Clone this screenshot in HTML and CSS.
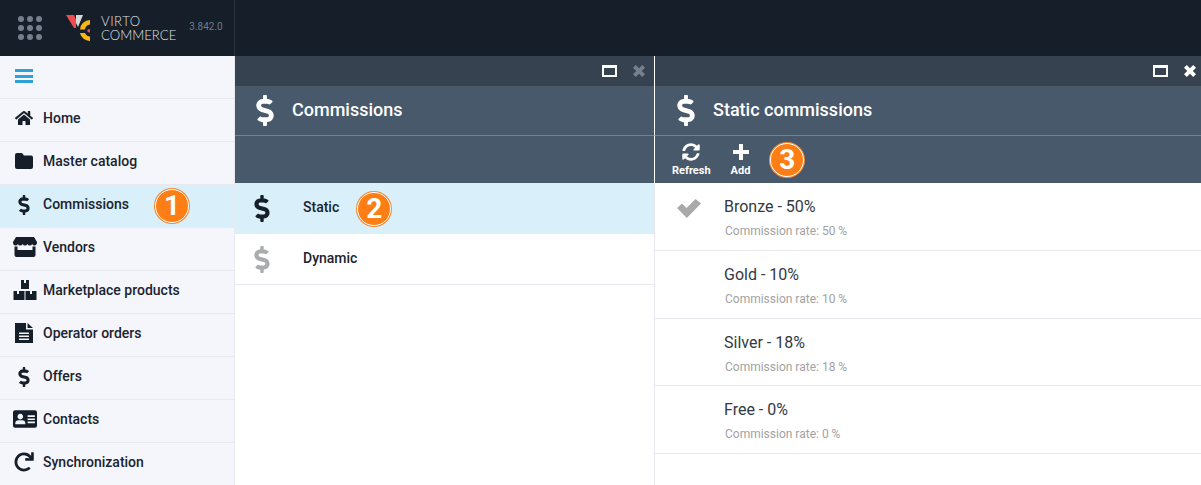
FILE: index.html
```html
<!DOCTYPE html>
<html lang="en">
<head>
    <meta charset="UTF-8">
    <title>Virto Commerce</title>
    <link rel="stylesheet" href="styles.css">
</head>
<body>
    <svg class="defs" width="0" height="0">
        <symbol id="i-dollar" viewBox="0 0 288 512"><path d="M209.2 233.4l-108-31.6C88.7 198.2 80 186.5 80 173.5c0-16.3 13.2-29.5 29.5-29.5h66.3c12.2 0 24.2 3.7 34.2 10.5 6.1 4.1 14.3 3.1 19.5-2l34.8-34c7.1-6.9 6.1-18.4-1.8-24.5C238 74.8 207.4 64.1 176 64V16c0-8.8-7.2-16-16-16h-32c-8.8 0-16 7.2-16 16v48h-2.5C45.8 64-5.4 118.7.5 183.6c4.2 46.1 39.4 83.6 83.8 96.6l102.5 30c12.5 3.7 21.2 15.3 21.2 28.3 0 16.3-13.2 29.5-29.5 29.5h-66.3C100 368 88 364.3 78 357.5c-6.1-4.1-14.3-3.1-19.5 2l-34.8 34c-7.1 6.9-6.1 18.4 1.8 24.5 24.5 19.2 55.1 29.9 86.5 30v48c0 8.8 7.2 16 16 16h32c8.8 0 16-7.2 16-16v-48.2c46.6-.9 90.3-28.6 105.7-72.7 21.5-61.6-14.6-124.8-73.5-141.7z"/></symbol>
        <symbol id="i-home" viewBox="-32 0 640 512"><path d="M280.37 148.26L96 300.11V464a16 16 0 0 0 16 16l112.06-.29a16 16 0 0 0 15.92-16V368a16 16 0 0 1 16-16h64a16 16 0 0 1 16 16v95.64a16 16 0 0 0 16 16.05L464 480a16 16 0 0 0 16-16V300L295.67 148.26a12.19 12.19 0 0 0-15.3 0zM571.6 251.47L488 182.56V44.05a12 12 0 0 0-12-12h-56a12 12 0 0 0-12 12v72.61L318.47 43a48 48 0 0 0-61 0L4.34 251.47a12 12 0 0 0-1.6 16.9l25.5 31A12 12 0 0 0 45.15 301l235.22-193.74a12.19 12.19 0 0 1 15.3 0L530.9 301a12 12 0 0 0 16.9-1.6l25.5-31a12 12 0 0 0-1.7-16.93z"/></symbol>
        <symbol id="i-folder" viewBox="-1 -2 20 20"><path d="M2 0 H7 L9 2.500 H16.500 A2 2 0 0 1 18 4.500 V14 A2 2 0 0 1 16 16 H2 A2 2 0 0 1 0 14 V2 A2 2 0 0 1 2 0 Z"/></symbol>
        <symbol id="i-store" viewBox="0 0 24 20"><path d="M3 0 H21 L24 5 V6 A2.500 2.500 0 0 1 19.200 7 A2.600 2.600 0 0 1 14.400 7 A2.600 2.600 0 0 1 9.600 7 A2.600 2.600 0 0 1 4.800 7 A2.500 2.500 0 0 1 0 6 V5 Z M1.500 9.500 H4.500 V13 H19.500 V9.500 H22.500 V18 A2 2 0 0 1 20.500 20 H3.500 A2 2 0 0 1 1.500 18 Z"/></symbol>
        <symbol id="i-cubes" viewBox="0 0 23 20"><path d="M7.500 0 H15.500 V9 H7.500 Z M10.500 0 V3 H12.500 V0 Z M0 11 H11 V20 H0 Z M3.500 11 V14 H5.500 V11 Z M12 11 H23 V20 H12 Z M16.500 11 V14 H18.500 V11 Z" fill-rule="evenodd"/></symbol>
        <symbol id="i-file" viewBox="0 0 18 20"><path d="M0 0 H11 V6.500 H18 V20 H0 Z M4 9.500 V11 H14 V9.500 Z M4 12.500 V14 H14 V12.500 Z M4 15.500 V17 H14 V15.500 Z M12.500 0 L18 5 H12.500 Z" fill-rule="evenodd"/></symbol>
        <symbol id="i-card" viewBox="0 0 23 17"><path d="M2 0 H21 A2 2 0 0 1 23 2 V15 A2 2 0 0 1 21 17 H2 A2 2 0 0 1 0 15 V2 A2 2 0 0 1 2 0 Z M7 3.500 A2.700 2.700 0 1 0 7.010 3.500 Z M2.200 13.500 H11.800 V12 A2.600 2.600 0 0 0 9.200 9.600 H4.800 A2.600 2.600 0 0 0 2.200 12 Z M14 5 V6.500 H21 V5 Z M14 8 V9.500 H21 V8 Z M14 11 V12.500 H21 V11 Z" fill-rule="evenodd"/></symbol>
        <symbol id="i-redo" viewBox="-6 -6 524 524"><path d="M500.33 0h-47.41a12 12 0 0 0-12 12.57l4 82.76A247.42 247.42 0 0 0 256 8C119.34 8 7.9 119.53 8 256.19 8.1 393.07 119.1 504 256 504a247.1 247.1 0 0 0 166.18-63.91 12 12 0 0 0 .48-17.43l-34-34a12 12 0 0 0-16.38-.55A176 176 0 1 1 402.1 157.8l-101.53-4.87a12 12 0 0 0-12.57 12v47.41a12 12 0 0 0 12 12h200.33a12 12 0 0 0 12-12V12a12 12 0 0 0-12-12z"/></symbol>
        <symbol id="i-refresh" viewBox="0 0 512 512"><path d="M370.72 133.28C339.458 104.008 298.888 87.962 255.848 88c-77.458.068-144.328 53.178-162.791 126.85-1.344 5.363-6.122 9.15-11.651 9.15H24.103c-7.498 0-13.194-6.807-11.807-14.176C33.933 94.924 134.813 8 256 8c66.448 0 126.791 26.136 171.315 68.685L463.03 40.97C478.149 25.851 504 36.559 504 57.941V192c0 13.255-10.745 24-24 24H345.941c-21.382 0-32.09-25.851-16.971-40.971l41.75-41.749zM32 296h134.059c21.382 0 32.09 25.851 16.971 40.971l-41.75 41.75c31.262 29.273 71.835 45.319 114.876 45.28 77.418-.07 144.315-53.144 162.787-126.849 1.344-5.363 6.122-9.15 11.651-9.15h57.304c7.498 0 13.194 6.807 11.807 14.176C478.067 417.076 377.187 504 256 504c-66.448 0-126.791-26.136-171.315-68.685L48.97 471.03C33.851 486.149 8 475.441 8 454.059V320c0-13.255 10.745-24 24-24z"/></symbol>
        <symbol id="i-close" viewBox="0 0 12 12"><path d="M2.800 0 L6 3.200 L9.200 0 L12 2.800 L8.800 6 L12 9.200 L9.200 12 L6 8.800 L2.800 12 L0 9.200 L3.200 6 L0 2.800 Z"/></symbol>
    </svg>

    <header class="topbar">
        <div class="brand">
            <div class="apps">
                <i></i><i></i><i></i><i></i><i></i><i></i><i></i><i></i><i></i>
            </div>
            <svg class="logo-mark" width="24" height="26" viewBox="0 0 24 26">
                <path d="M0 0 H8 L10 4.500 V13 H8 Z" fill="#ef4b50"/>
                <path d="M10 0 H17 L12 12 L10 8 Z" fill="#d8d8d8"/>
                <path d="M24 5 V9.500 A6 6 0 0 0 19 14.500 H14 A10 10 0 0 1 24 5 Z M14 18 H19 A6 6 0 0 0 24 21.500 V26 A10 10 0 0 1 14 18 Z" fill="#fbb615"/>
                <circle cx="23" cy="15.700" r="1.700" fill="#ef4b50"/>
            </svg>
            <div class="logo-text"><span class="logo-top">VIRTO</span><br>COMMERCE</div>
            <span class="version">3.842.0</span>
        </div>
    </header>

    <div class="workspace">
        <nav class="sidebar">
            <div class="menu-toggle">
                <span></span><span></span><span></span>
            </div>
            <a class="nav-item"><svg class="nav-icon"><use href="#i-home"/></svg>Home</a>
            <a class="nav-item"><svg class="nav-icon"><use href="#i-folder"/></svg>Master catalog</a>
            <a class="nav-item selected"><svg class="nav-icon nav-dollar"><use href="#i-dollar"/></svg>Commissions<span class="badge badge-nav">1</span></a>
            <a class="nav-item"><svg class="nav-icon nav-icon-wide"><use href="#i-store"/></svg>Vendors</a>
            <a class="nav-item"><svg class="nav-icon nav-icon-wide"><use href="#i-cubes"/></svg>Marketplace products</a>
            <a class="nav-item"><svg class="nav-icon"><use href="#i-file"/></svg>Operator orders</a>
            <a class="nav-item"><svg class="nav-icon nav-dollar"><use href="#i-dollar"/></svg>Offers</a>
            <a class="nav-item"><svg class="nav-icon nav-icon-wide"><use href="#i-card"/></svg>Contacts</a>
            <a class="nav-item"><svg class="nav-icon"><use href="#i-redo"/></svg>Synchronization</a>
        </nav>

        <section class="blade blade-left">
            <div class="blade-controls">
                <span class="ctl-max"></span>
                <svg class="ctl-close dim"><use href="#i-close"/></svg>
            </div>
            <div class="blade-head">
                <svg class="head-icon"><use href="#i-dollar"/></svg>
                <h2>Commissions</h2>
            </div>
            <div class="blade-toolbar"></div>
            <div class="type-row selected">
                <svg class="type-icon"><use href="#i-dollar"/></svg>
                <span class="type-name">Static</span>
                <span class="badge badge-type">2</span>
            </div>
            <div class="type-row">
                <svg class="type-icon muted"><use href="#i-dollar"/></svg>
                <span class="type-name">Dynamic</span>
            </div>
        </section>

        <section class="blade blade-right">
            <div class="blade-controls">
                <span class="ctl-max"></span>
                <svg class="ctl-close"><use href="#i-close"/></svg>
            </div>
            <div class="blade-head">
                <svg class="head-icon"><use href="#i-dollar"/></svg>
                <h2>Static commissions</h2>
            </div>
            <div class="blade-toolbar">
                <div class="tool tool-refresh">
                    <svg class="tool-icon"><use href="#i-refresh"/></svg>
                    <span>Refresh</span>
                </div>
                <div class="tool tool-add">
                    <span class="plus"></span>
                    <span>Add</span>
                </div>
                <span class="badge badge-tool">3</span>
            </div>
            <div class="rate-row">
                <svg class="check" viewBox="0 0 24 19"><path d="M0 9 L5 4.500 L9.500 9 L18.500 0 L24 4.500 L9.800 19 Z"/></svg>
                <div class="rate-title">Bronze - 50%</div>
                <div class="rate-sub">Commission rate: 50 %</div>
            </div>
            <div class="rate-row">
                <div class="rate-title">Gold - 10%</div>
                <div class="rate-sub">Commission rate: 10 %</div>
            </div>
            <div class="rate-row">
                <div class="rate-title">Silver - 18%</div>
                <div class="rate-sub">Commission rate: 18 %</div>
            </div>
            <div class="rate-row">
                <div class="rate-title">Free - 0%</div>
                <div class="rate-sub">Commission rate: 0 %</div>
            </div>
        </section>
    </div>
</body>
</html>
```
FILE: styles.css
```css
* {
    box-sizing: border-box;
}
html, body {
    margin: 0;
    height: 485px;
    overflow: hidden;
}
body {
    font-family: Roboto, "Liberation Sans", sans-serif;
    color: #1a2330;
    background: #fff;
}
.defs {
    position: absolute;
}

/* top bar */
.topbar {
    height: 56px;
    background: #161e29;
}
.brand {
    width: 235px;
    height: 56px;
    display: flex;
    align-items: center;
    padding-left: 18px;
    border-right: 1px solid #2a3440;
}
.apps {
    width: 24px;
    display: grid;
    grid-template-columns: repeat(3, 6px);
    gap: 3px;
}
.apps i {
    width: 6px;
    height: 6px;
    border-radius: 50%;
    background: #76808c;
}
.logo-mark {
    margin-left: 24px;
}
.logo-text {
    margin-left: 11px;
    padding-bottom: 1px;
    font-family: Lato, sans-serif;
    font-weight: 300;
    font-size: 13.2px;
    line-height: 14px;
    color: #dfe2e6;
}
.logo-top {
    letter-spacing: .5px;
}
.version {
    margin-left: 13px;
    padding-bottom: 3px;
    font-size: 10px;
    color: #6d7c90;
}

/* layout */
.workspace {
    display: flex;
    height: 429px;
}

/* sidebar */
.sidebar {
    width: 235px;
    flex: none;
    background: #f5f6fb;
    border-right: 1px solid #e8e9f0;
}
.menu-toggle {
    height: 43px;
    padding: 13px 0 0 15px;
    border-bottom: 1px solid #e8e9f0;
}
.menu-toggle span {
    display: block;
    width: 18px;
    height: 3px;
    margin-bottom: 2.500px;
    background: #2ea1d8;
}
.nav-item {
    height: 43px;
    display: flex;
    align-items: center;
    padding: 0 0 4px 14px;
    font-size: 14px;
    font-weight: 500;
    border-bottom: 1px solid #e8e9f0;
}
.nav-item.selected {
    background: #d9eff9;
    border-bottom-color: #d9eff9;
}
.nav-icon {
    width: 20px;
    height: 20px;
    margin-right: 9px;
    fill: #161e29;
}
.nav-dollar {
    margin-top: 2px;
}
.nav-icon-wide {
    width: 24px;
    margin-left: -1px;
    margin-right: 6px;
}

/* blades */
.blade-left {
    width: 420px;
    flex: none;
    border-right: 1px solid #e8e9f0;
}
.blade-right {
    flex: 1;
}
.blade-controls {
    height: 30px;
    background: #36424f;
    display: flex;
    align-items: center;
    justify-content: flex-end;
    gap: 16px;
    padding-right: 5px;
}
.blade-left .blade-controls {
    border-right: 1px solid #fff;
    margin-right: -1px;
    padding-right: 9px;
}
.ctl-max {
    width: 15px;
    height: 12px;
    border: 2px solid #fff;
    border-top-width: 3px;
}
.ctl-close {
    width: 12px;
    height: 12px;
    fill: #fff;
}
.ctl-close.dim {
    fill: #76808c;
}
.blade-head {
    height: 50px;
    background: #47596b;
    border-bottom: 1px solid #75828f;
    display: flex;
    align-items: center;
    padding-left: 20px;
}
.blade-right .blade-head {
    padding-left: 21px;
}
.head-icon {
    width: 20px;
    height: 31px;
    fill: #fff;
    margin-right: 17px;
}
.blade-head h2 {
    margin: 0;
    padding-bottom: 2px;
    font-size: 18px;
    font-weight: 500;
    color: #fff;
}
.blade-toolbar {
    height: 47px;
    background: #47596b;
    display: flex;
    align-items: center;
}
.blade-right .blade-head, .blade-right .blade-toolbar {
    border-left: 1px solid #fff;
    margin-left: -1px;
}

/* toolbar buttons */
.tool {
    display: flex;
    flex-direction: column;
    align-items: center;
    font-size: 11px;
    font-weight: 700;
    color: #fff;
}
.tool-refresh {
    margin-left: 17px;
}
.tool-add {
    margin-left: 20px;
}
.tool-icon {
    width: 18px;
    height: 18px;
    margin-bottom: 3px;
    fill: #fff;
}
.plus {
    position: relative;
    width: 18px;
    height: 18px;
    margin-bottom: 3px;
}
.plus::before, .plus::after {
    content: "";
    position: absolute;
    background: #fff;
}
.plus::before {
    left: 1px;
    right: 1px;
    top: 7px;
    height: 4px;
}
.plus::after {
    top: 1px;
    bottom: 1px;
    left: 7px;
    width: 4px;
}

/* list rows */
.type-row {
    height: 51px;
    display: flex;
    align-items: center;
    padding-left: 17px;
    border-bottom: 1px solid #e8e9f0;
    font-size: 14px;
    font-weight: 500;
}
.type-row.selected {
    background: #d9eff9;
    border-bottom-color: #d9eff9;
}
.type-icon {
    width: 20px;
    height: 27px;
    margin-right: 31px;
    fill: #161e29;
}
.type-icon.muted {
    fill: #a9abad;
}
.type-name {
    padding-bottom: 2px;
}
.rate-row {
    position: relative;
    height: 67.750px;
    padding: 14px 0 0 69px;
    border-bottom: 1px solid #e8e9f0;
}
.check {
    position: absolute;
    left: 22px;
    top: 16px;
    width: 24px;
    height: 19px;
    fill: #a9a9a9;
}
.rate-title {
    font-size: 16px;
    line-height: 20px;
    color: #333a44;
}
.rate-sub {
    margin: 7px 0 0 1px;
    font-size: 12px;
    line-height: 14px;
    color: #a2a2a2;
}

/* numbered callouts */
.badge {
    width: 34px;
    height: 34px;
    flex: none;
    display: flex;
    align-items: center;
    justify-content: center;
    border-radius: 50%;
    background: #fd7e14;
    border: 1px solid #fff;
    box-shadow: 0 0 0 1px #f58a36;
    color: #fff;
    font-size: 28px;
    font-weight: 700;
    line-height: 1;
}
.badge-nav {
    margin: 3px 0 0 26px;
}
.badge-type {
    margin: 2px 0 0 18px;
}
.badge-tool {
    margin: 1px 0 0 20px;
}
```
